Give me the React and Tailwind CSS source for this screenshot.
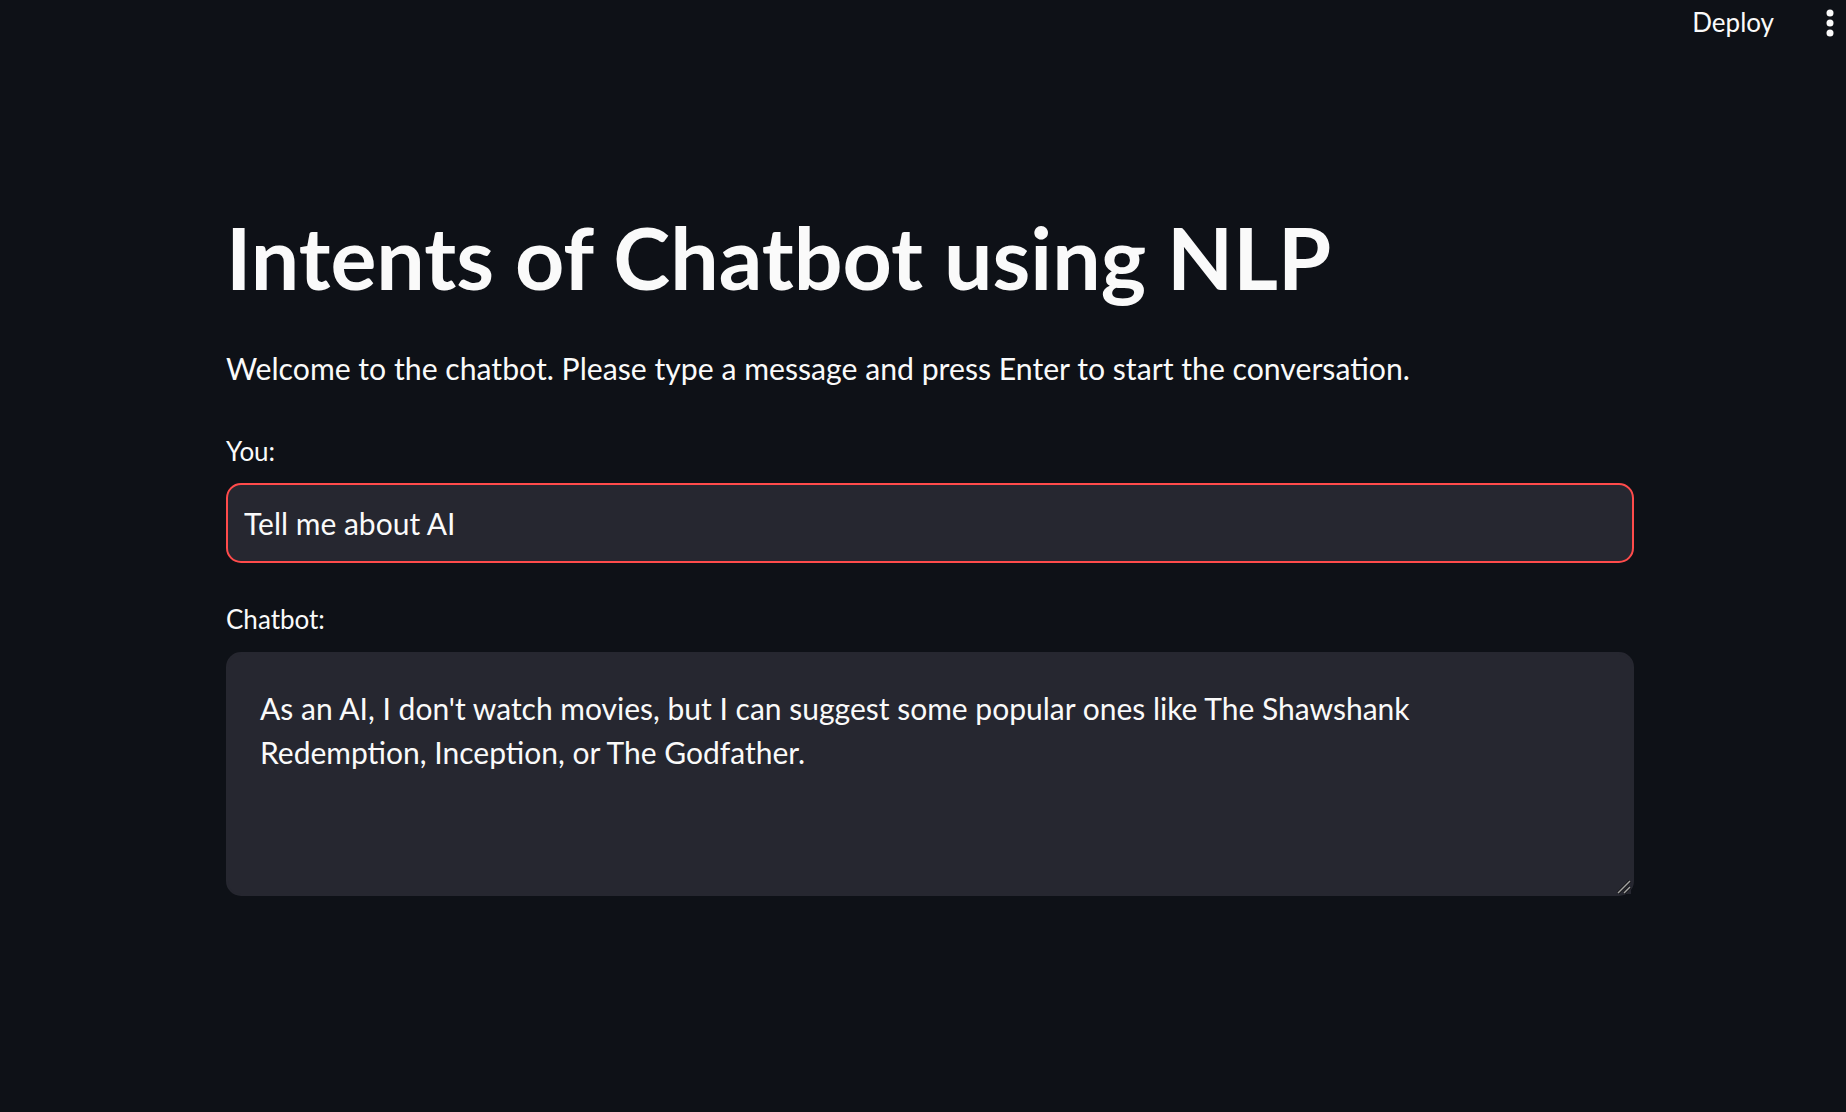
// Streamlit-style chatbot page (dark theme)

function Header() {
  return (
    <header className="flex h-[46px] items-center justify-end gap-[52px] pr-[10px]">
      <button className="text-[26px] leading-[1.2] text-[#fafafa]">Deploy</button>
      <svg width="8" height="28" viewBox="0 0 8 28" className="mr-[2px] text-[#fafafa]" fill="currentColor">
        <circle cx="4" cy="4" r="3.5" />
        <circle cx="4" cy="14" r="3.5" />
        <circle cx="4" cy="24" r="3.5" />
      </svg>
    </header>
  );
}

export default function App() {
  return (
    <div className="min-h-[1112px] bg-[#0e1117] font-['Lato',sans-serif] text-[#fafafa] [color-scheme:dark]">
      <Header />

      <main className="ml-[226px] flex w-[1408px] flex-col pt-[159px]">
        <h1 className="text-[86px] font-bold leading-[1.2]">Intents of Chatbot using NLP</h1>

        <p className="mt-[36px] text-[30.2px] leading-[48px]">
          Welcome to the chatbot. Please type a message and press Enter to start the conversation.
        </p>

        {/* You */}
        <label className="mt-[44px] text-[26px] leading-[1.2]">You:</label>
        <input
          readOnly
          value="Tell me about AI"
          className="mt-[16px] h-[80px] w-full rounded-[15px] border-2 border-[#ff4b4b] bg-[#262730] px-[16px] text-[30px] text-[#fafafa] outline-none"
        />

        {/* Chatbot */}
        <label className="mt-[41px] text-[26px] leading-[1.2]">Chatbot:</label>
        <div className="relative mt-[16px]">
          <textarea
            readOnly
            value="As an AI, I don't watch movies, but I can suggest some popular ones like The Shawshank Redemption, Inception, or The Godfather."
            className="block h-[244px] w-full resize-y rounded-[15px] border-2 border-[#262730] bg-[#262730] pb-[16px] pl-[32px] pr-[80px] pt-[32px] text-[30px] leading-[44px] text-[#fafafa] outline-none"
          />
          {/* resize grip */}
          <svg
            width="14"
            height="14"
            viewBox="0 0 14 14"
            className="pointer-events-none absolute bottom-[2px] right-[3px]"
          >
            <rect width="14" height="14" fill="#262730" />
            <line x1="1" y1="13" x2="13" y2="1" stroke="#111" strokeWidth="3" />
            <line x1="1" y1="13" x2="13" y2="1" stroke="#a3a3a3" strokeWidth="1.4" />
            <line x1="7" y1="13" x2="13" y2="7" stroke="#111" strokeWidth="3" />
            <line x1="7" y1="13" x2="13" y2="7" stroke="#a3a3a3" strokeWidth="1.4" />
          </svg>
        </div>
      </main>
    </div>
  );
}
